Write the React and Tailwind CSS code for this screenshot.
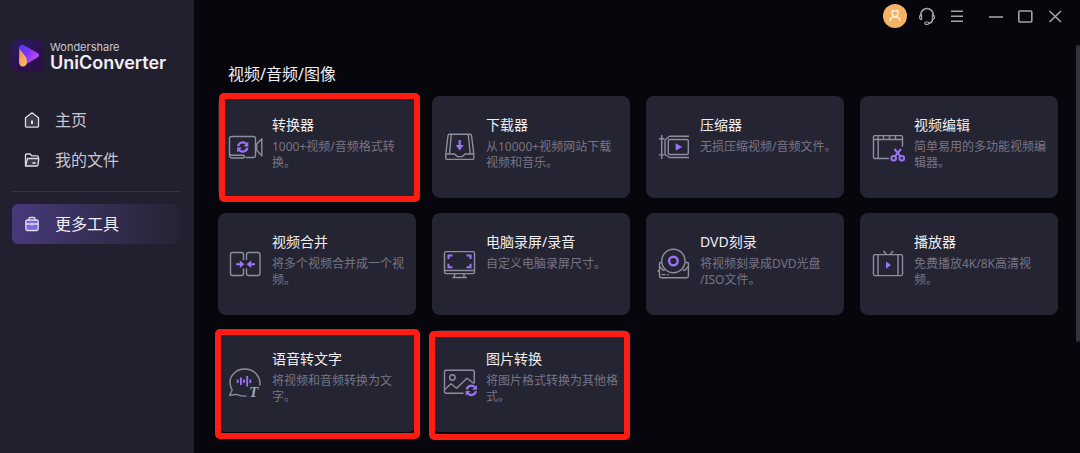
import { useState } from 'react';

const line = '#8f8d9e';
const purple = '#9a74f5';

// Two arrows chasing each other, shared by the converter and image tools
function SyncMark({ x, y }) {
  return (
    <g transform={`translate(${x} ${y})`} stroke={purple} strokeWidth="2.3" fill="none">
      <path d="M-4.6 -.8a4.7 4.7 0 0 1 8.2-2.2" />
      <path d="M4.6 .8a4.7 4.7 0 0 1-8.2 2.2" />
      <path d="M5.6-5.400v4.800H.8z" fill={purple} stroke="none" />
      <path d="M-5.6 5.400V.6H-.8z" fill={purple} stroke="none" />
    </g>
  );
}

function ToolIcon({ children }) {
  return (
    <svg
      viewBox="0 0 36 36"
      className="size-9 shrink-0 self-center overflow-visible"
      fill="none"
      stroke={line}
      strokeWidth="1.4"
      strokeLinejoin="round"
      aria-hidden="true"
    >
      {children}
    </svg>
  );
}

const icons = {
  converter: (
    <>
      <path d="M3.500 7.500h22a2 2 0 0 1 2 2v17a2 2 0 0 1-2 2H17.500M3.500 7.500a2 2 0 0 0-2 2v16.500M1.500 26a3 3 0 0 0 3 3h11a1.500 1.500 0 0 0 0-2.800H3.500a2 2 0 0 1-2-2" />
      <path d="M28.800 15l5-5.200v17l-5-5.200z" />
      <SyncMark x={14.7} y={18} />
    </>
  ),
  downloader: (
    <>
      <path d="M7.500 5.200h20.500a1.500 1.500 0 0 1 1.500 1.200l2.300 18.600v4.200a1.200 1.200 0 0 1-1.200 1.200H5a1.200 1.200 0 0 1-1.200-1.200V25L6 6.400a1.500 1.500 0 0 1 1.500-1.200z" />
      <path d="M4 25h8.500l3 2.600h4.600l3-2.600h8.700M9.300 5.500L7.500 25M26.300 5.500L28.200 25" />
      <path d="M17.700 11v6" stroke={purple} strokeWidth="2.200" />
      <path d="M13.700 16h8l-4 5.600z" fill={purple} stroke="none" />
    </>
  ),
  compressor: (
    <>
      <path d="M5.700 6v24M3 9.700h5.500M3 25.900h5.500" />
      <path d="M33 7.300H13.500L9 11v14.500l4.500 3H33" />
      <rect x="12.300" y="10.500" width="20" height="15" rx="1.500" />
      <path d="M19.700 14.300v7.400l6.500-3.700z" fill={purple} stroke="none" />
    </>
  ),
  editor: (
    <>
      <path d="M32.500 17.700V7.800a1.200 1.200 0 0 0-1.200-1.200H4.700a1.200 1.200 0 0 0-1.200 1.200v20.500a1.200 1.200 0 0 0 1.200 1.200H19" />
      <path d="M3.500 10.500h29M8.200 6.600v22.900M13.500 6.600v3.900M19.500 6.600v3.900M25.500 6.600v3.900" />
      <g stroke={purple} strokeWidth="2">
        <circle cx="23.700" cy="29.200" r="2.300" />
        <circle cx="31.800" cy="29.200" r="2.300" />
        <path d="M24.500 20l6 7.400M31 20l-6 7.400" />
      </g>
    </>
  ),
  merger: (
    <>
      <path d="M15.500 14V8.500a2 2 0 0 0-2-2h-9a2 2 0 0 0-2 2v19a2 2 0 0 0 2 2h9a2 2 0 0 0 2-2v-5" />
      <path d="M18.500 14V8.500a2 2 0 0 1 2-2h9.500a2 2 0 0 1 2 2v19a2 2 0 0 1-2 2h-9.500a2 2 0 0 1-2-2v-5" />
      <path d="M8 18.300h5M27 18.300h-5" stroke={purple} strokeWidth="2" />
      <path d="M11.800 14.600v7.400l4.600-3.700zM23.200 14.600v7.400l-4.600-3.700z" fill={purple} stroke="none" />
    </>
  ),
  recorder: (
    <>
      <rect x="2.500" y="5.600" width="30" height="22" rx="1.500" />
      <path d="M2.500 24.500h30M12.500 27.600v3.700M22 27.600v3.700M10.300 31.500H25" />
      <path
        d="M10.500 9.500h-4v3.500M24.500 9.500h4v3.500M10.500 21.300h-4v-3.500M24.500 21.300h4v-3.500"
        stroke={purple}
        strokeWidth="2.100"
        strokeLinejoin="miter"
      />
    </>
  ),
  burner: (
    <>
      <circle cx="17.400" cy="15" r="11.700" />
      <circle cx="17.400" cy="15" r="4.300" stroke={purple} strokeWidth="2.400" />
      <path d="M5.700 16.500H4.500a1 1 0 0 0-1 1V30a1.700 1.700 0 0 0 1.700 1.700h25.500a1.700 1.700 0 0 0 1.700-1.700V17.500a1 1 0 0 0-1-1h-1.700" />
      <path d="M1.500 25h2M3.500 20.500l3.600 3.800h1.600M32.400 20.500l-3.600 3.800h-2M5.500 28.600h4M11 28.600h1.700" />
    </>
  ),
  player: (
    <>
      <rect x="3.500" y="8.600" width="29" height="21" rx="1.500" />
      <path d="M8 8.600v21M28 8.600v21M13.500 5l3 3.600M23 5l-3 3.600" />
      <path d="M16 15.500v7.200l5-3.600z" fill={purple} stroke="none" />
    </>
  ),
  speech: (
    <>
      <path d="M31.800 22.500c1.300-7.500-4.500-16.500-15-16.500C8.500 6 2 12 2 19.500c0 3.200 1 5.500 2.200 7.300L1.700 32.200l7-.8c2.500 1.300 6 2 9.800 1.500" />
      <path
        d="M9.700 16.500v3.600M12.900 14.500v7.600M16 16.500v3.600M19.200 13v10.600M22.300 16.500v3.600"
        stroke={purple}
        strokeWidth="1.800"
      />
      <text
        x="21"
        y="34"
        fill="#a3a1b0"
        stroke="none"
        fontSize="15"
        fontStyle="italic"
        fontWeight="bold"
        fontFamily="'Liberation Serif', serif"
      >
        T
      </text>
    </>
  ),
  image: (
    <>
      <path d="M32.300 20V8.700a1.500 1.500 0 0 0-1.500-1.500H4a1.500 1.500 0 0 0-1.500 1.500v20A1.500 1.500 0 0 0 4 30.200h17.500" />
      <circle cx="10.400" cy="14.500" r="2.700" />
      <path d="M2.700 26.500l6.300-5.700 5.500 4.400 10.500-10 7.200 5.600" />
      <SyncMark x={29.3} y={27.3} />
    </>
  ),
};

const tools = [
  { id: 'converter', title: '转换器', desc: '1000+视频/音频格式转\n换。', frame: '-top-[3px] left-px -right-1 -bottom-1' },
  { id: 'downloader', title: '下载器', desc: '从10000+视频网站下载\n视频和音乐。' },
  { id: 'compressor', title: '压缩器', desc: '无损压缩视频/音频文件。' },
  { id: 'editor', title: '视频编辑', desc: '简单易用的多功能视频编\n辑器。' },
  { id: 'merger', title: '视频合并', desc: '将多个视频合并成一个视\n频。' },
  { id: 'recorder', title: '电脑录屏/录音', desc: '自定义电脑录屏尺寸。' },
  { id: 'burner', title: 'DVD刻录', desc: '将视频刻录成DVD光盘\n/ISO文件。' },
  { id: 'player', title: '播放器', desc: '免费播放4K/8K高清视\n频。' },
  { id: 'speech', title: '语音转文字', desc: '将视频和音频转换为文\n字。', frame: '-top-px -left-[3px] -right-1 -bottom-[7px]' },
  { id: 'image', title: '图片转换', desc: '将图片格式转换为其他格\n式。', frame: 'top-px -left-[3px] right-0 -bottom-2' },
];

function ToolCard({ tool }) {
  return (
    <button
      type="button"
      className="relative flex min-h-[102px] items-start gap-2 rounded-lg bg-[#252432] pl-[10px] text-left hover:bg-[#2c2a3b]"
    >
      <ToolIcon>{icons[tool.id]}</ToolIcon>
      <span className="block min-w-0 flex-1 pt-[19px]">
        <span className="block text-sm leading-5 text-[#eeeef2]">{tool.title}</span>
        <span className="mt-1 block whitespace-pre-line text-xs leading-4 text-[#777584]">{tool.desc}</span>
      </span>
      {tool.frame && (
        <span className={`pointer-events-none absolute rounded-[5px] border-[6px] border-[#ff1c12] ${tool.frame}`} />
      )}
    </button>
  );
}

function Logo() {
  return (
    <div className="flex items-center gap-[6px]">
      <svg viewBox="0 0 32 32" className="size-8 shrink-0" aria-hidden="true">
        <defs>
          <linearGradient id="logoBg" x1="0" y1="0" x2="1" y2="1">
            <stop offset="0" stopColor="#2b1a63" />
            <stop offset="1" stopColor="#2a0d3d" />
          </linearGradient>
          <linearGradient id="logoPlay" x1="0" y1="0" x2="1" y2=".6">
            <stop offset="0" stopColor="#4a3cf0" />
            <stop offset=".5" stopColor="#7b35f5" />
            <stop offset="1" stopColor="#c64cf0" />
          </linearGradient>
          <linearGradient id="logoDrop" x1="0" y1="0" x2="1" y2="1">
            <stop offset="0" stopColor="#f08a5a" />
            <stop offset="1" stopColor="#ffc45c" />
          </linearGradient>
        </defs>
        <rect width="32" height="32" rx="6" fill="url(#logoBg)" />
        <path d="M7 8.500C7 5.500 9.500 4 12 5.200l13.500 7.800c2 1.200 2 3.200 0 4.400L14.500 24z" fill="url(#logoPlay)" />
        <path d="M7.300 8.500c2 3.500 7.700 8 7.700 13 0 3-1.700 5-4.200 5S7 24.500 7 21.500z" fill="url(#logoDrop)" />
      </svg>
      <div className="font-[Inter,sans-serif] text-[#f0eff5]">
        <p className="text-[11px] leading-[14px] text-[#c9c8d2]">Wondershare</p>
        <p className="text-lg leading-[18px] font-semibold">UniConverter</p>
      </div>
    </div>
  );
}

const navIcons = {
  home: (
    <>
      <path d="M1.500 5.700L8 .8l6.500 4.900v8.200a1.300 1.300 0 0 1-1.300 1.300H2.800a1.300 1.300 0 0 1-1.300-1.300z" fill="#3b394a" />
      <path d="M8 8.500v3.500" strokeWidth="2" />
    </>
  ),
  files: (
    <>
      <path d="M1.500 14V3a1 1 0 0 1 1-1h3.700l1.500 1.800h5.600a1 1 0 0 1 1 1v1.700" />
      <path d="M3.500 6.500h11.300L14 13.200a1 1 0 0 1-1 .8H1.500z" fill="#3b394a" />
      <path d="M8.500 11h3" strokeWidth="1.800" />
    </>
  ),
  tools: (
    <>
      <path d="M5 4V2.500a1 1 0 0 1 1-1h4a1 1 0 0 1 1 1V4" />
      <rect x="1.800" y="4" width="12.400" height="10.500" rx="1.500" fill="#7d68e0" />
      <path d="M2 8h12M8 7v2.500" />
    </>
  ),
};

function NavItem({ id, label, active, onSelect }) {
  return (
    <a
      href={`#${id}`}
      aria-current={active ? 'page' : undefined}
      onClick={() => onSelect(id)}
      className={`flex h-10 items-center gap-[15px] rounded-md pl-3 text-base ${
        active ? 'bg-linear-to-r from-[#48397b] to-[#252333] text-[#f0eff5]' : 'text-[#c6c5ce]'
      }`}
    >
      <svg viewBox="0 0 16 16" className="size-4" fill="none" stroke="#dddce6" strokeWidth="1.3" strokeLinejoin="round" aria-hidden="true">
        {navIcons[id]}
      </svg>
      {label}
    </a>
  );
}

function Sidebar() {
  const [current, setCurrent] = useState('tools');

  return (
    <aside className="w-[194px] shrink-0 bg-[#221f2f] pt-10 pr-[14px] pl-3">
      <Logo />
      <nav className="mt-7">
        <NavItem id="home" label="主页" active={current === 'home'} onSelect={setCurrent} />
        <NavItem id="files" label="我的文件" active={current === 'files'} onSelect={setCurrent} />
        <hr className="mt-[11px] mb-3 border-[#353342]" />
        <NavItem id="tools" label="更多工具" active={current === 'tools'} onSelect={setCurrent} />
      </nav>
    </aside>
  );
}

function BarButton({ label, children }) {
  return (
    <button type="button" aria-label={label} className="size-4">
      <svg viewBox="0 0 16 16" className="size-4 overflow-visible" fill="none" stroke="#a3a2ab" strokeWidth="1.6" aria-hidden="true">
        {children}
      </svg>
    </button>
  );
}

function TitleBar() {
  return (
    <header className="flex h-8 items-center justify-end gap-6 pr-[17px]">
      <div className="flex items-center gap-3">
        <button type="button" aria-label="账户" className="flex size-6 items-center justify-center rounded-full bg-[#f5b465]">
          <svg viewBox="0 0 24 24" className="size-6" fill="none" stroke="#fff4e0" strokeWidth="1.3" strokeLinejoin="round" aria-hidden="true">
            <path d="M9.300 6.500l1.500.7 4-.7v3.300a2.700 2.700 0 0 1-5.500 0zM7.300 17v-.8a3 3 0 0 1 3-3h3.500a3 3 0 0 1 3 3v.8" />
          </svg>
        </button>
        <BarButton label="客服">
          <path d="M1.700 8.500V6.800a6.300 6.300 0 0 1 12.600 0v1.700" />
          <path d="M2.600 6.800v4.700a1.900 1.900 0 0 1-2-1.900V8.700a1.900 1.900 0 0 1 2-1.900zM13.400 6.800v4.700a1.900 1.900 0 0 0 2-1.900V8.700a1.900 1.900 0 0 0-2-1.900z" strokeWidth="1.200" />
          <path d="M13.400 11.500c0 2-1.400 3.600-3.700 3.800" />
          <rect x="5.800" y="14" width="4" height="2.400" rx="1.200" strokeWidth="1.200" />
        </BarButton>
        <BarButton label="菜单">
          <path d="M4 3.300h12M4 8.300h12M4 13.300h12" />
        </BarButton>
      </div>
      <div className="flex items-center gap-[14px]">
        <BarButton label="最小化">
          <path d="M2 9h14" />
        </BarButton>
        <BarButton label="最大化">
          <rect x="1.800" y="3" width="13" height="11" rx="1" />
        </BarButton>
        <BarButton label="关闭">
          <path d="M2.500 3l11.500 11M14 3L2.500 14" />
        </BarButton>
      </div>
    </header>
  );
}

export default function App() {
  return (
    <div className="flex min-h-screen bg-[#07060c] font-['Noto_Sans','Noto_Sans_CJK_SC',sans-serif]">
      <Sidebar />
      <div className="flex min-w-0 flex-1 flex-col">
        <TitleBar />
        <div className="flex flex-1">
          <main className="flex-1 pt-[30px] pr-[18px] pl-6">
            <h1 className="mb-[10px] pl-[10px] text-base leading-6 text-[#eeeef2]">视频/音频/图像</h1>
            <div className="grid grid-cols-4 gap-x-4 gap-y-[15px]">
              {tools.map((tool) => (
                <ToolCard key={tool.id} tool={tool} />
              ))}
            </div>
          </main>
          {/* Scroll thumb */}
          <div className="mt-[13px] h-[297px] w-1 rounded-full bg-[#34323e]"></div>
        </div>
      </div>
    </div>
  );
}
